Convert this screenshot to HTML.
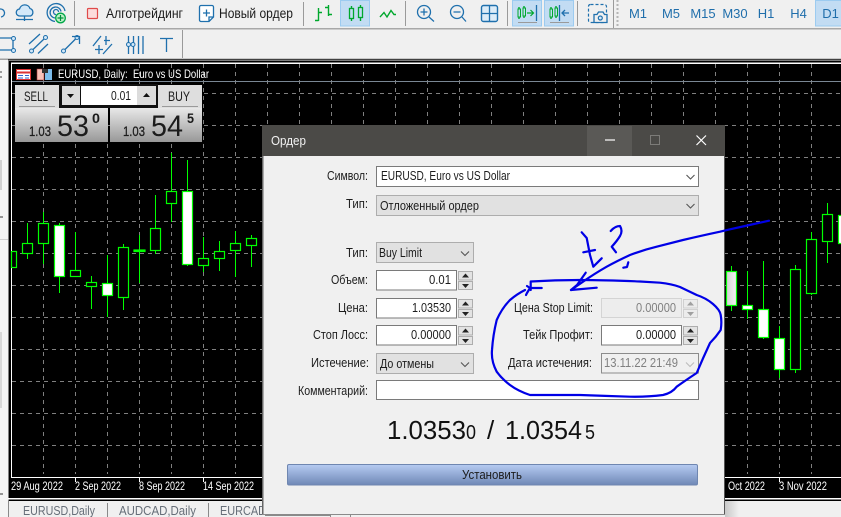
<!DOCTYPE html>
<html><head><meta charset="utf-8"><style>
html,body{margin:0;padding:0;width:841px;height:517px;overflow:hidden;background:#f0f0f0}
svg{display:block;font-family:"Liberation Sans","Noto Sans CJK SC",sans-serif}
text{font-size:12.5px;fill:#1c1c1c}
.m text{fill:#1f6eab;font-size:13px;text-anchor:middle}
.i{fill:none;stroke:#1f70ad;stroke-width:1.3}
.g{fill:none;stroke:#00a82d;stroke-width:1.4}
.d text{fill:#fff;font-size:12px}
.sp{fill:#e3e3e3;stroke:#adadad}
</style></head><body>
<svg width="841" height="517" viewBox="0 0 841 517" xmlns="http://www.w3.org/2000/svg">
<defs>
<linearGradient id="pg" x1="0" y1="0" x2="0" y2="1"><stop offset="0" stop-color="#e8e8e8"/><stop offset="1" stop-color="#989898"/></linearGradient>
<linearGradient id="bt" x1="0" y1="0" x2="0" y2="1"><stop offset="0" stop-color="#b6cbf2"/><stop offset="1" stop-color="#6f88b6"/></linearGradient>
<linearGradient id="hg" x1="0" y1="0" x2="1" y2="0"><stop offset="0" stop-color="#c8c8c8"/><stop offset="1" stop-color="#f0f0f0"/></linearGradient>
<linearGradient id="c1" x1="0" y1="0" x2="1" y2="0"><stop offset="0" stop-color="#d4d4d4"/><stop offset="1" stop-color="#f2f2f2"/></linearGradient>
</defs>
<rect width="841" height="517" fill="#f0f0f0"/>

<!-- toolbar separators -->
<rect x="0" y="28" width="841" height="1.5" fill="#a8a8a8"/>
<rect x="0" y="58.5" width="841" height="1.5" fill="#a0a0a0"/>
<path d="M74.5 1V26M303.5 2V26M405.5 1V26M507.5 1V26M577.5 1V26M613.5 0V28M182.5 30V58" stroke="#9a9a9a" stroke-width="1" fill="none"/>
<path d="M617.5 0V27" stroke="#b5b5b5" stroke-width="2" stroke-dasharray="2 2"/>

<!-- left partial -->
<path d="M0 9A4 4 0 0 1 1 17" class="i"/>
<!-- cloud -->
<path d="M20 16a3.5 3.5 0 0 1-.5-7a5.5 5.5 0 0 1 10.5-.5a4 4 0 0 1 .5 7.5z" fill="#d3e8f9" stroke="#1f70ad" stroke-width="1.3"/>
<path d="M24.5 16V21M16 19.5H33" class="i"/>
<!-- signal -->
<path d="M55 21.5A9 9 0 1 1 65 11M55 18A5.5 5.5 0 1 1 61 11.5M56 14.5A2.5 2.5 0 1 1 58.5 12" class="i"/>
<circle cx="60.5" cy="18" r="4.8" fill="#bff0c8" stroke="#00a84a" stroke-width="1.3"/>
<path d="M60.5 15V21M57.5 18H63.500" stroke="#00903c" stroke-width="1.2"/>
<!-- red square -->
<rect x="87.500" y="8.500" width="10" height="10" rx="1" fill="#fcdcdc" stroke="#e04a4a" stroke-width="1.2"/>
<text x="106" y="18" textLength="77" lengthAdjust="spacingAndGlyphs" style="font-size:13.5px">Алготрейдинг</text>
<!-- new order icon -->
<path d="M201 5.500H212a1.500 1.500 0 0 1 1.500 1.500V17L209 21.500H201a1.500 1.500 0 0 1-1.500-1.500V7A1.500 1.500 0 0 1 201 5.500zM209 21.500V17H213.500" fill="#fff" stroke="#1f70ad" stroke-width="1.3"/>
<path d="M206.500 9.500V16.500M203 13H210" stroke="#1f70ad" stroke-width="1.3"/>
<text x="219" y="18" textLength="74" lengthAdjust="spacingAndGlyphs" style="font-size:13.5px">Новый ордер</text>
<!-- bars -->
<path d="M318.500 8V21M315 20.500H318.500M318.500 12.500H322M328.500 5V16M325 7.500H328.500M328.500 14.500H332" class="g"/>
<!-- candles active -->
<rect x="340.500" y="0.500" width="29" height="25.500" fill="#c2dcf3" stroke="#9ccbf0"/>
<path d="M351.500 6V21M360.500 5V21" class="g"/>
<rect x="349.500" y="8.500" width="4" height="10" fill="#c2dcf3" stroke="#00a82d" stroke-width="1.3"/>
<rect x="358.500" y="7.500" width="4" height="10" fill="#c2dcf3" stroke="#00a82d" stroke-width="1.3"/>
<!-- line chart -->
<path d="M380 17L384 12.500L387 17L391 10.500L394 14.500H396" class="g"/>
<!-- zoom in -->
<circle cx="424" cy="12" r="6.500" class="i"/><path d="M429 17L434 21.500M420.500 12H427.500M424 8.500V15.500" class="i"/>
<circle cx="457" cy="12" r="6.500" class="i"/><path d="M462 17L466 21.500M453.500 12H460.500" class="i"/>
<rect x="481.500" y="5.500" width="16" height="16" rx="2" fill="#dcecf8" stroke="#1f70ad" stroke-width="1.400"/><path d="M489.500 5.500V21.500M481.500 13.500H497.500" class="i"/>
<!-- shift buttons -->
<rect x="512.500" y="0.500" width="29" height="25.500" fill="#c2dcf3" stroke="#9ccbf0"/>
<rect x="544.500" y="0.500" width="29" height="25.500" fill="#c2dcf3" stroke="#9ccbf0"/>
<path d="M519 7V19M524 6V18M551 7V19M556 6V18" class="g"/>
<rect x="518" y="9" width="2.500" height="8" fill="#c2dcf3" stroke="#00a82d"/><rect x="523" y="8" width="2.500" height="8" fill="#c2dcf3" stroke="#00a82d"/>
<rect x="550" y="9" width="2.500" height="8" fill="#c2dcf3" stroke="#00a82d"/><rect x="555" y="8" width="2.500" height="8" fill="#c2dcf3" stroke="#00a82d"/>
<path d="M527 13H533M530.500 10L533.500 13L530.500 16" fill="none" stroke="#00a82d" stroke-width="1.200"/>
<path d="M536.500 5V21M559.500 5V21M562 13H569M565 10L562 13L565 16" class="i"/>
<path d="M518 22.500H537M550 22.500H569" stroke="#9a9a9a" stroke-width="1"/>
<!-- camera -->
<rect x="588.500" y="4.500" width="18" height="18" rx="2" fill="none" stroke="#1f70ad" stroke-width="1.200" stroke-dasharray="3 2"/>
<path d="M594 14.500H597L598.500 12H603L604.500 14.500H607V22.500H594z" fill="#f0f0f0" stroke="#1f70ad" stroke-width="1.300"/>
<circle cx="600.300" cy="18" r="2" fill="#d3e8f9" stroke="#1f70ad" stroke-width="1.200"/>
<!-- timeframes -->
<rect x="815.500" y="0.500" width="26" height="25.500" fill="#c2dcf3" stroke="#9ccbf0"/>
<g class="m"><text x="638" y="18">M1</text><text x="671" y="18">M5</text><text x="703" y="18">M15</text><text x="735" y="18">M30</text><text x="766" y="18">H1</text><text x="798.500" y="18">H4</text><text x="830.500" y="18">D1</text></g>

<!-- row 2 icons -->
<path d="M0 38H13V50H0" class="i"/>
<circle cx="13.500" cy="38.500" r="2" fill="#d3e8f9" stroke="#1f70ad"/><circle cx="13.500" cy="50.500" r="2" fill="#d3e8f9" stroke="#1f70ad"/>
<path d="M29 44L40 34M33 49.500L44 39M38 53.500L48 44" class="i"/>
<circle cx="45.500" cy="37.500" r="2" fill="#d3e8f9" stroke="#1f70ad"/><circle cx="31.500" cy="51" r="2" fill="#d3e8f9" stroke="#1f70ad"/>
<path d="M65 49.500L76 38.500" class="i"/>
<circle cx="63.500" cy="51" r="2" fill="#d3e8f9" stroke="#1f70ad"/><circle cx="77" cy="37.500" r="2" fill="#d3e8f9" stroke="#1f70ad"/>
<path d="M72 36.500H79.500V44" class="i"/>
<path d="M93 46L101 36M103 54L112 44M104 40.500H110M106 36V45M95 49.500H103M99 45V54" class="i"/>
<path d="M128.500 36V54M133.500 36V54M138.500 36V54M143 36V54" class="i"/>
<circle cx="128.500" cy="44.500" r="2" fill="#d3e8f9" stroke="#1f70ad"/><circle cx="133" cy="44.500" r="2" fill="#d3e8f9" stroke="#1f70ad"/>
<path d="M160 38.500H173M166.500 38.500V52" class="i"/>

<!-- left strip -->
<rect x="0" y="60" width="8" height="457" fill="#f4f4f4"/>
<rect x="0" y="160" width="2" height="30" fill="#d0d0d0"/>
<rect x="0" y="332" width="2" height="76" fill="#d8d8d8"/>
<rect x="0" y="239" width="8" height="1" fill="#d0d0d0"/>
<path d="M0 217H3M0 494H3" stroke="#333"/>
<path d="M0 72H2M0 77H2" stroke="#444"/>

<!-- chart -->
<rect x="8" y="59" width="833" height="442" fill="#000"/>
<rect x="8" y="59.500" width="833" height="1.500" fill="#808080"/>
<rect x="8" y="60" width="1" height="441" fill="#808080"/>
<path d="M43.500 64V474M75.500 64V474M107.500 64V474M139.500 64V474M171.500 64V474M203.500 64V474M235.500 64V474M267.500 64V474M299.500 64V125M331.500 64V125M363.500 64V125M395.500 64V125M427.500 64V125M459.500 64V125M491.500 64V125M523.500 64V125M555.500 64V125M587.500 64V125M619.500 64V125M651.500 64V125M683.500 64V125M715.500 64V125M747.500 64V474M779.500 64V474M811.500 64V474" stroke="#808080" stroke-dasharray="4 4" fill="none"/>
<path d="M12 93.500H841M12 125.500H841M12 157.500H841M12 189.500H841M12 221.500H841M12 253.500H841M12 285.500H841M12 317.500H841M12 349.500H841M12 381.500H841M12 413.500H841M12 445.500H841" stroke="#808080" stroke-dasharray="4 4" fill="none"/>
<rect x="11" y="62.500" width="830" height="1.500" fill="#fff"/>
<rect x="11" y="63" width="1" height="415" fill="#fff"/>
<rect x="12" y="81" width="829" height="1" fill="#7a8794"/>
<rect x="11" y="477" width="830" height="1" fill="#fff"/>
<path d="M75.500 477V482M139.500 477V482M203.500 477V482M779.500 477V482" stroke="#fff"/>
<rect x="8" y="498" width="833" height="1.500" fill="#fff"/>
<g class="d">
<text x="11" y="490" textLength="52" lengthAdjust="spacingAndGlyphs">29 Aug 2022</text>
<text x="75" y="490" textLength="46" lengthAdjust="spacingAndGlyphs">2 Sep 2022</text>
<text x="139" y="490" textLength="46" lengthAdjust="spacingAndGlyphs">8 Sep 2022</text>
<text x="203" y="490" textLength="51" lengthAdjust="spacingAndGlyphs">14 Sep 2022</text>
<text x="728" y="490" textLength="37" lengthAdjust="spacingAndGlyphs">Oct 2022</text>
<text x="779" y="490" textLength="48" lengthAdjust="spacingAndGlyphs">3 Nov 2022</text>
</g>

<!-- candles -->
<g stroke="#00ff00" stroke-width="1" fill="none">
<path d="M27.500 223V259M43.500 212V264M59.500 223V293M75.500 232V277M91.500 276V309M107.500 255V317M123.500 244V310M139.500 235V283M155.500 195V254M171.500 153V222M187.500 160V266M203.500 237V272M219.500 241V271M235.500 231V277M251.500 235V267M731.500 266V311M747.500 271V319M763.500 261V339M779.500 326V378M795.500 265V373M811.500 232V295M827.500 203V263"/>
</g>
<g stroke="#00ff00" stroke-width="1.200" fill="#000">
<rect x="11.500" y="251.500" width="5" height="16"/>
<rect x="22.500" y="243.500" width="10" height="10"/>
<rect x="38.500" y="223.500" width="10" height="20"/>
<rect x="54.500" y="225.500" width="10" height="51" fill="#fff"/>
<rect x="70.500" y="270.500" width="10" height="6"/>
<rect x="86.500" y="282.500" width="10" height="4"/>
<rect x="102.500" y="283.500" width="10" height="12" fill="#fff"/>
<rect x="118.500" y="247.500" width="10" height="50"/>
<rect x="134" y="250" width="11" height="1.500" fill="#0f0"/>
<rect x="150.500" y="228.500" width="10" height="22"/>
<rect x="166.500" y="191.500" width="10" height="12"/>
<rect x="182.500" y="191.500" width="10" height="73" fill="#fff"/>
<rect x="198.500" y="258.500" width="10" height="7"/>
<rect x="214.500" y="251.500" width="10" height="7"/>
<rect x="230.500" y="243.500" width="10" height="7"/>
<rect x="246.500" y="238.500" width="10" height="7"/>
<rect x="726.500" y="271.500" width="10" height="34" fill="url(#c1)"/>
<rect x="742.500" y="305.500" width="10" height="4" fill="#fff"/>
<rect x="758.500" y="309.500" width="10" height="28" fill="#fff"/>
<rect x="774.500" y="338.500" width="10" height="31" fill="#fff"/>
<rect x="790.500" y="269.500" width="10" height="100"/>
<rect x="806.500" y="239.500" width="10" height="54"/>
<rect x="822.500" y="214.500" width="10" height="27"/>
<rect x="838.500" y="215.500" width="10" height="28" fill="#fff"/>
</g>

<!-- chart title -->
<rect x="16.500" y="69.500" width="14" height="10" fill="#fff" stroke="#d33"/>
<path d="M17 72.500H30" stroke="#d33" stroke-width="2"/><path d="M18 75.500H23M25 75.500H29M18 78H23M25 78H29" stroke="#36c"/>
<path d="M37 69H44V80H37z" fill="#f8c0b8" stroke="#a33" stroke-width=".6"/><path d="M45 69H52V80H45z" fill="#7cbcec"/><rect x="42" y="69" width="6" height="4" fill="#333"/>
<text x="58" y="78" textLength="151" lengthAdjust="spacingAndGlyphs" style="fill:#fff;font-size:12px" xml:space="preserve">EURUSD, Daily:  Euro vs US Dollar</text>

<!-- one click -->
<rect x="15" y="85" width="44" height="23" fill="#dedede"/>
<rect x="59" y="84" width="99" height="24" fill="#111"/>
<rect x="62" y="86" width="18" height="19" fill="#dcdcdc"/>
<rect x="81" y="86" width="56" height="19" fill="#fff"/>
<rect x="137" y="86" width="19" height="19" fill="#dcdcdc"/>
<path d="M67 94H74L70.500 98z M143 97H150L146.500 93z" fill="#111"/>
<rect x="158" y="85" width="44" height="23" fill="#dedede"/>
<path d="M19 106.500H55M162 106.500H198" stroke="#9a9a9a"/>
<text x="24" y="101" textLength="24" lengthAdjust="spacingAndGlyphs" style="font-size:14px">SELL</text>
<text x="168" y="101" textLength="22" lengthAdjust="spacingAndGlyphs" style="font-size:14px">BUY</text>
<text x="111" y="100" textLength="20" lengthAdjust="spacingAndGlyphs" style="font-size:13px">0.01</text>
<rect x="15" y="108" width="93" height="34" fill="url(#pg)"/>
<rect x="110" y="108" width="92" height="34" fill="url(#pg)"/>
<text x="29" y="136" textLength="22" lengthAdjust="spacingAndGlyphs" style="font-size:14px;stroke:#1c1c1c;stroke-width:.25">1.03</text>
<text x="57" y="136" textLength="32" lengthAdjust="spacingAndGlyphs" style="font-size:30px">53</text>
<text x="92" y="123" textLength="8" lengthAdjust="spacingAndGlyphs" style="font-size:14px;font-weight:bold">0</text>
<text x="123" y="136" textLength="22" lengthAdjust="spacingAndGlyphs" style="font-size:14px;stroke:#1c1c1c;stroke-width:.25">1.03</text>
<text x="151" y="136" textLength="32" lengthAdjust="spacingAndGlyphs" style="font-size:30px">54</text>
<text x="187" y="123" textLength="7" lengthAdjust="spacingAndGlyphs" style="font-size:14px;font-weight:bold">5</text>

<!-- tabs -->
<path d="M8.500 501V517M107.500 503V517M208.500 503V517" stroke="#8a8a8a"/>
<text x="23" y="515" textLength="72" lengthAdjust="spacingAndGlyphs" style="fill:#666e78;font-size:13px">EURUSD,Daily</text>
<text x="119" y="515" textLength="77" lengthAdjust="spacingAndGlyphs" style="fill:#666e78;font-size:13px">AUDCAD,Daily</text>
<text x="220" y="515" textLength="46" lengthAdjust="spacingAndGlyphs" style="fill:#666e78;font-size:13px">EURCAD</text>
<rect x="725" y="501" width="14" height="16" fill="url(#hg)"/>
<path d="M265 515.500H330M330.500 514V517M350.500 514V517" stroke="#8a8a8a"/>

<!-- dialog -->
<rect x="262" y="125" width="463" height="390" fill="#f0f0f0"/>
<rect x="262" y="125" width="1.500" height="390" fill="#666"/>
<rect x="724" y="125" width="1" height="390" fill="#555"/>
<rect x="262" y="514" width="463" height="1" fill="#8a8a8a"/>
<rect x="262" y="125" width="463" height="31" fill="#4b4a47"/>
<rect x="587" y="126" width="45" height="30" fill="#5a5956"/>
<text x="271" y="145" textLength="35" lengthAdjust="spacingAndGlyphs" style="fill:#f2f2f2;font-size:13px">Ордер</text>
<path d="M605 140H615" stroke="#fff" stroke-width="1.200"/>
<rect x="650.500" y="135.500" width="9" height="9" fill="none" stroke="#7c7b78"/>
<path d="M696.500 135.500L706 145M706 135.500L696.500 145" stroke="#fff" stroke-width="1.200"/>

<!-- labels -->
<text x="327" y="180" textLength="41" lengthAdjust="spacingAndGlyphs">Символ:</text>
<text x="346" y="208" textLength="22" lengthAdjust="spacingAndGlyphs">Тип:</text>
<text x="346" y="257" textLength="22" lengthAdjust="spacingAndGlyphs">Тип:</text>
<text x="331" y="284" textLength="37" lengthAdjust="spacingAndGlyphs">Объем:</text>
<text x="338" y="312" textLength="30" lengthAdjust="spacingAndGlyphs">Цена:</text>
<text x="313" y="339" textLength="55" lengthAdjust="spacingAndGlyphs">Стоп Лосс:</text>
<text x="311" y="367" textLength="58" lengthAdjust="spacingAndGlyphs">Истечение:</text>
<text x="298" y="395" textLength="70" lengthAdjust="spacingAndGlyphs">Комментарий:</text>

<!-- fields -->
<rect x="376.500" y="166.500" width="322" height="20" fill="#fff" stroke="#7a7a7a"/>
<text x="381" y="180" textLength="129" lengthAdjust="spacingAndGlyphs">EURUSD, Euro vs US Dollar</text>
<rect x="376.500" y="195.500" width="322" height="20" fill="#e1e1e1" stroke="#adadad"/>
<text x="380" y="210" textLength="99" lengthAdjust="spacingAndGlyphs">Отложенный ордер</text>
<rect x="376.500" y="242.500" width="97" height="20" fill="#e1e1e1" stroke="#adadad"/>
<text x="379" y="257" textLength="43" lengthAdjust="spacingAndGlyphs">Buy Limit</text>
<rect x="376.500" y="270.500" width="80" height="19.500" fill="#fff" stroke="#7a7a7a"/>
<text x="429" y="284" textLength="22" lengthAdjust="spacingAndGlyphs">0.01</text>
<rect x="376.500" y="298.500" width="80" height="19.500" fill="#fff" stroke="#7a7a7a"/>
<text x="412" y="312" textLength="39" lengthAdjust="spacingAndGlyphs">1.03530</text>
<rect x="376.500" y="325.500" width="80" height="19.500" fill="#fff" stroke="#7a7a7a"/>
<text x="411" y="339" textLength="40" lengthAdjust="spacingAndGlyphs">0.00000</text>
<rect x="376.500" y="353.500" width="97" height="20" fill="#e1e1e1" stroke="#adadad"/>
<text x="380" y="368" textLength="54" lengthAdjust="spacingAndGlyphs">До отмены</text>
<rect x="376.500" y="380.500" width="322" height="19" fill="#fff" stroke="#7a7a7a"/>
<path d="M686.500 175L690.500 179L694.500 175M686.500 204L690.500 208L694.500 204M461 251.500L465 255.500L469 251.500M461 362.500L465 366.500L469 362.500" fill="none" stroke="#555" stroke-width="1.100"/>

<!-- spinners -->
<rect class="sp" x="458.500" y="271.500" width="14" height="8.500"/><rect class="sp" x="458.500" y="281.500" width="14" height="8"/>
<rect class="sp" x="458.500" y="299.500" width="14" height="8.500"/><rect class="sp" x="458.500" y="309.500" width="14" height="8"/>
<rect class="sp" x="458.500" y="326.500" width="14" height="8.500"/><rect class="sp" x="458.500" y="336.500" width="14" height="8"/>
<rect class="sp" x="683.500" y="326.500" width="14" height="8.500"/><rect class="sp" x="683.500" y="336.500" width="14" height="8"/>
<rect x="683.500" y="299.500" width="14" height="8.500" fill="#ececec" stroke="#d0d0d0"/><rect x="683.500" y="309.500" width="14" height="8" fill="#ececec" stroke="#d0d0d0"/>
<path d="M462 277.500H469L465.500 273.500zM462 284H469L465.500 288zM462 305.500H469L465.500 301.500zM462 312H469L465.500 316zM462 332.500H469L465.500 328.500zM462 339H469L465.500 343zM687 332.500H694L690.500 328.500zM687 339H694L690.500 343z" fill="#222"/>
<path d="M687 305.500H694L690.500 301.500zM687 312H694L690.500 316z" fill="#a0a0a0"/>

<!-- right column -->
<text x="514" y="312" textLength="79" lengthAdjust="spacingAndGlyphs">Цена Stop Limit:</text>
<rect x="601.500" y="298.500" width="80" height="19" fill="#ededed" stroke="#d4d4d4"/>
<text x="636" y="312" textLength="40" lengthAdjust="spacingAndGlyphs" style="fill:#808080">0.00000</text>
<text x="523" y="339" textLength="70" lengthAdjust="spacingAndGlyphs">Тейк Профит:</text>
<rect x="601.500" y="325.500" width="80" height="19.500" fill="#fff" stroke="#7a7a7a"/>
<text x="636" y="339" textLength="40" lengthAdjust="spacingAndGlyphs">0.00000</text>
<text x="508" y="367" textLength="84" lengthAdjust="spacingAndGlyphs">Дата истечения:</text>
<rect x="601.500" y="353.500" width="97" height="19.500" fill="#f0f0f0" stroke="#8c8c8c"/>
<text x="604" y="367" textLength="74" lengthAdjust="spacingAndGlyphs" style="fill:#808080">13.11.22 21:49</text>
<path d="M686 362.500L690 366.500L694 362.500" fill="none" stroke="#bbb" stroke-width="1.100"/>

<!-- big price -->
<text x="387" y="439" textLength="79" lengthAdjust="spacingAndGlyphs" style="font-size:26px;fill:#111">1.0353</text>
<text x="466" y="439" textLength="10" lengthAdjust="spacingAndGlyphs" style="font-size:20px;fill:#111">0</text>
<text x="487" y="439" style="font-size:26px;fill:#111">/</text>
<text x="505" y="439" textLength="77" lengthAdjust="spacingAndGlyphs" style="font-size:26px;fill:#111">1.0354</text>
<text x="585" y="439" textLength="10" lengthAdjust="spacingAndGlyphs" style="font-size:20px;fill:#111">5</text>

<!-- button -->
<rect x="287.500" y="464.500" width="410" height="20.500" rx="1.500" fill="url(#bt)" stroke="#6f86b0"/>
<text x="462" y="479" textLength="60" lengthAdjust="spacingAndGlyphs">Установить</text>

<!-- annotations -->
<g fill="none" stroke="#0000e6" stroke-width="2.200" stroke-linecap="round" stroke-linejoin="round">
<path d="M530.700 290L530.700 281.500Q555 280 580 280T640 281.500L660 282.700Q672 284 680 287L696.700 295Q706 298 713 304T720.700 315Q722 322 720.700 330Q716 337 710 343Q703 358 696.700 373Q686 380 676.700 386.700Q672 393 663 395Q648 397 630 396.700Q605 396 580 395Q555 395 530 395Q518 391 510 385Q502 379 496.700 371.700Q491 361 492 350Q493 335 496.700 320Q502 308 510 300Q517 294 525 290"/>
<path d="M527 286L530 288L527 293L526 295M530 288H541.700"/>
<path d="M769 220.700L745 226L730 229.300L720 231.700Q700 236 683 240L656.700 246.700Q643 250 630 255Q617 261 606.700 266.700Q594 274 583 281.700L571 290L596.700 287.700"/>
<path d="M585.700 272.700L577 285L571 290"/>
<path d="M581.700 232.300L586.700 238L590 255L593.300 266.700L601.700 258.300M583.300 252.300L595 250"/>
<path d="M610.700 231Q615 226 620 226Q623 231 620 236T611.700 246.700L616 252.300"/>
<path d="M628.300 262.300L627 267L623.300 267.700"/>
</g>
</svg>
</body></html>
